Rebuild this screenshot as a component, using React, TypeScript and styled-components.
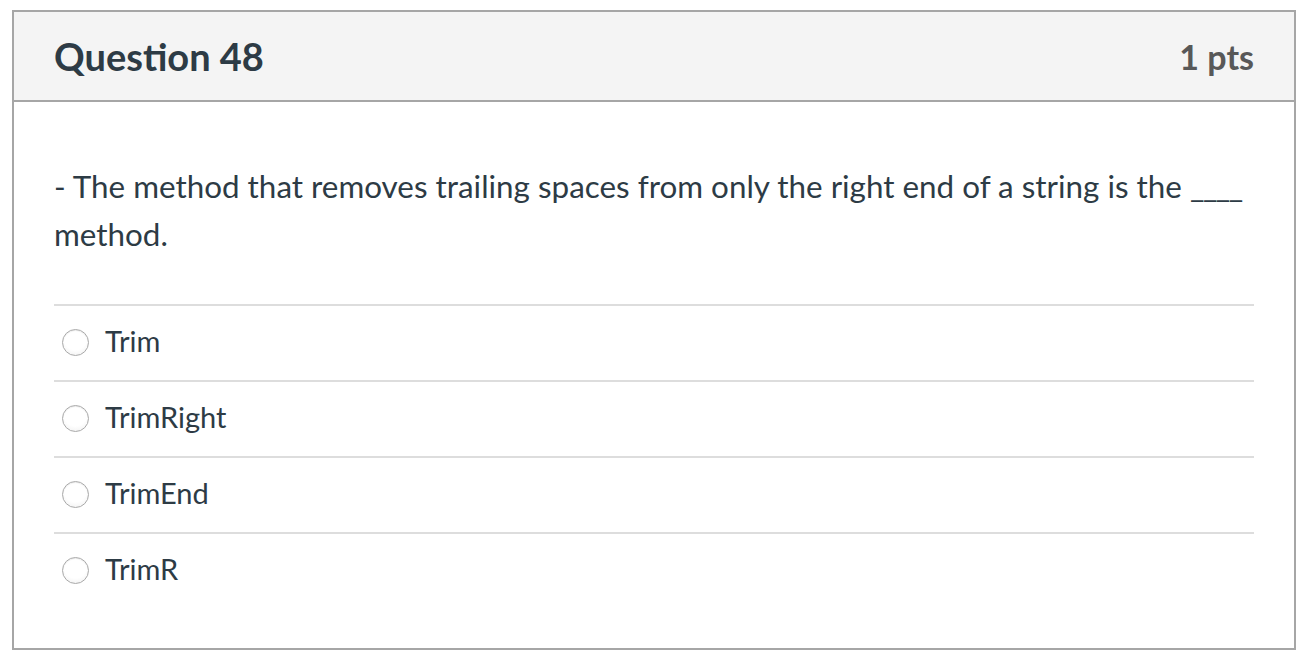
import React from 'react'
import styled, { createGlobalStyle } from 'styled-components';


const GlobalStyle = createGlobalStyle`
    html, body {
        margin: 0;
        padding: 0;
        background: #fff;
        font-family: Lato, "Open Sans", sans-serif;
    }
`;

const Page = styled.div`
    padding: 10px 12px;
`;

const Card = styled.div`
    border: 2px solid #a6a6a6;
    width: 1284px;
    box-sizing: border-box;
`;

const Header = styled.div`
    background-color: #f4f4f4;
    border-bottom: 2px solid #a6a6a6;
    height: 90px;
    box-sizing: border-box;
    padding: 0 40px;
    display: flex;
    justify-content: space-between;
    align-items: center;
`;

const Title = styled.h2`
    margin: 0;
    font-size: 38px;
    font-weight: 700;
    color: #2d3b45;
`;

const Points = styled.span`
    font-size: 34px;
    font-weight: 700;
    color: #585858;
`;

const Body = styled.div`
    padding: 60px 40px 40px;
`;

const QuestionText = styled.p`
    margin: 0 0 46px;
    font-size: 31.4px;
    line-height: 48px;
    color: #2d3b45;
`;

const Blank = styled.span`
    letter-spacing: -1.5px;
`;

const Answers = styled.div`
    display: flex;
    flex-direction: column;
`;

const Answer = styled.label`
    display: flex;
    align-items: center;
    gap: 16px;
    height: 76px;
    box-sizing: border-box;
    border-top: 2px solid #dddddd;
    padding: 0 0 6px 8px;
    font-size: 29px;
    color: #2d3b45;
`;

const Radio = styled.span`
    width: 27px;
    height: 27px;
    flex-shrink: 0;
    border-radius: 50%;
    box-sizing: border-box;
    border: 1px solid #a9a9a9;
    background: radial-gradient(circle at 50% 35%, #ffffff 55%, #ececec 100%);
    box-shadow: inset 0 1px 1px rgba(0, 0, 0, 0.08);
    margin-top: 5px;
`;


const options = ["Trim", "TrimRight", "TrimEnd", "TrimR"];

export default function App() {
  return (
    <>
        <GlobalStyle />
        <Page>
            <Card>
                <Header>
                    <Title>Question 48</Title>
                    <Points>1 pts</Points>
                </Header>
                <Body>
                    <QuestionText>
                        - The method that removes trailing spaces from only the right end of a string is the <Blank>____</Blank> method.
                    </QuestionText>
                    <Answers>
                        {options.map((opt) => (
                            <Answer key={opt}>
                                <Radio />
                                {opt}
                            </Answer>
                        ))}
                    </Answers>
                </Body>
            </Card>
        </Page>
    </>
  )
}
